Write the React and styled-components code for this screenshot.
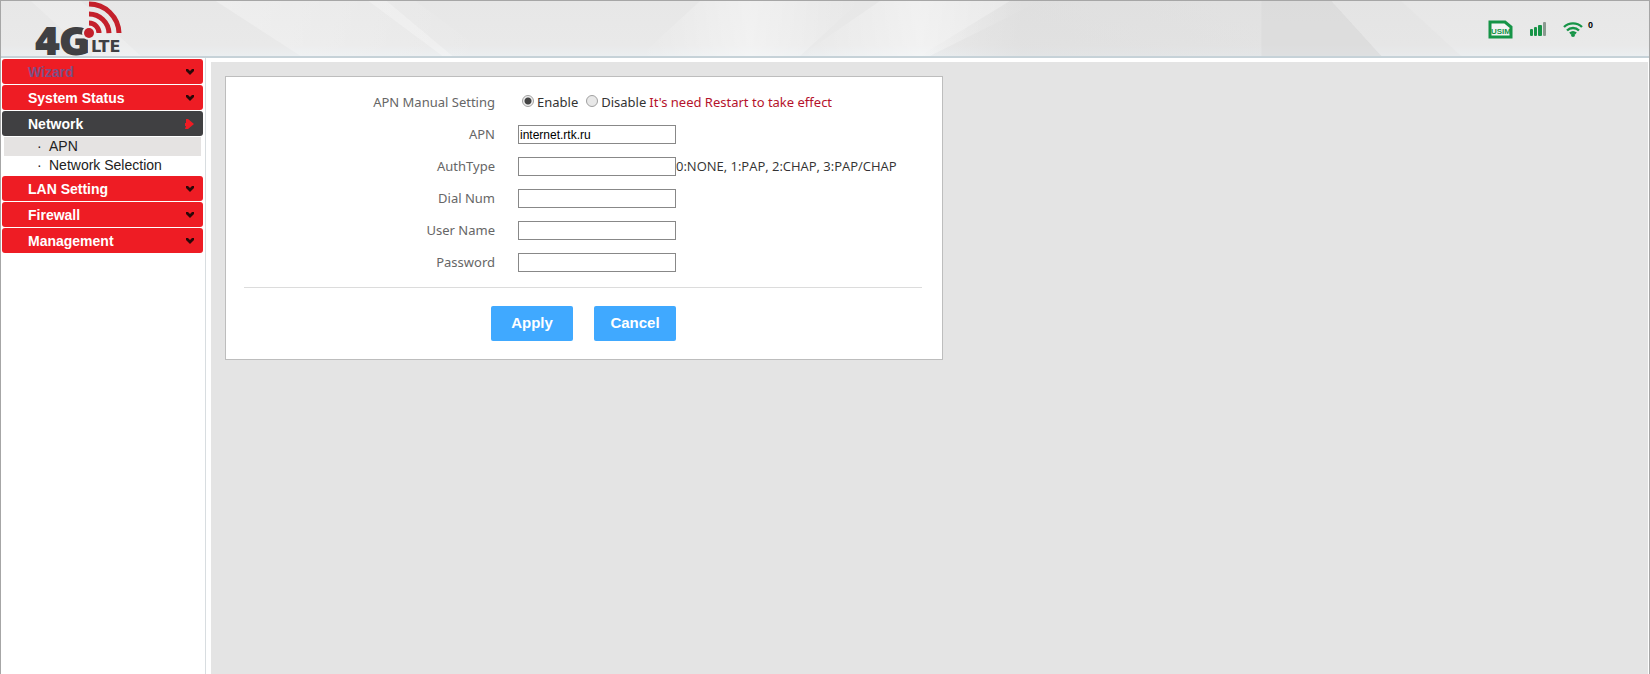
import React, { useState } from "react";
import styled, { createGlobalStyle } from "styled-components";

const menu = [
  { title: "Wizard", muted: true },
  { title: "System Status" },
  { title: "Network", open: true, children: ["APN", "Network Selection"] },
  { title: "LAN Setting" },
  { title: "Firewall" },
  { title: "Management" },
];

const fields = [
  { name: "apn", label: "APN" },
  { name: "authType", label: "AuthType", hint: "0:NONE, 1:PAP, 2:CHAP, 3:PAP/CHAP" },
  { name: "dialNum", label: "Dial Num" },
  { name: "userName", label: "User Name" },
  { name: "password", label: "Password", type: "password" },
];

const emptyForm = {
  apn: "internet.rtk.ru",
  authType: "",
  dialNum: "",
  userName: "",
  password: "",
};

const Logo = () => (
  <LogoSvg width="92" height="56" viewBox="0 0 92 56" role="img" aria-label="4G LTE">
    <g fill="none" stroke="#c4202b" strokeWidth="5">
      <path d="M54 3a30 30 0 0 1 30 29" />
      <path d="M54 13a20 20 0 0 1 20 19" />
      <path d="M54 22a10 10 0 0 1 10 10" />
    </g>
    <text
      x="0"
      y="53"
      fontFamily="DejaVu Sans, sans-serif"
      fontWeight="700"
      fontSize="36"
      fill="#404043"
      stroke="#404043"
      strokeWidth="2"
    >
      4G
    </text>
    <circle cx="54" cy="32" r="7" fill="#ececec" />
    <circle cx="54" cy="32" r="5" fill="#c4202b" />
    <rect x="53" y="38" width="4" height="17" fill="#ececec" />
    <text x="56" y="51" fontFamily="DejaVu Sans, sans-serif" fontWeight="700" fontSize="16" fill="#404043">
      LTE
    </text>
  </LogoSvg>
);

// translucent shards behind the header, stretched to its width
const HeaderArt = () => (
  <ArtSvg viewBox="0 0 1650 56" preserveAspectRatio="none" aria-hidden="true">
    <defs>
      <linearGradient id="shine">
        <stop offset="0" stopColor="#fff" stopOpacity="0" />
        <stop offset="0.5" stopColor="#fff" stopOpacity="0.4" />
        <stop offset="1" stopColor="#fff" stopOpacity="0" />
      </linearGradient>
      <linearGradient id="fade">
        <stop offset="0" stopColor="#fff" stopOpacity="0.3" />
        <stop offset="1" stopColor="#fff" stopOpacity="0" />
      </linearGradient>
      <linearGradient id="shade">
        <stop offset="0" stopColor="#d4d4d4" stopOpacity="0" />
        <stop offset="0.3" stopColor="#d4d4d4" stopOpacity="0.4" />
        <stop offset="1" stopColor="#d4d4d4" stopOpacity="0.3" />
      </linearGradient>
    </defs>
    <path d="M30 0h50l60 56H90z" fill="#fff" opacity="0.2" />
    <path d="M215 0h200l75 56H300z" fill="url(#fade)" />
    <path d="M368 0h18l66 56h-10z" fill="#fff" opacity="0.25" />
    <path d="M700 0h160l-60 56H640z" fill="url(#shine)" />
    <path d="M880 0h160l-110 56H800z" fill="url(#shine)" />
    <path d="M1010 0h252v56H920z" fill="url(#shade)" />
    <path d="M1262 0h70l50 56h-120z" fill="#d2d2d2" opacity="0.5" />
    <path d="M1332 0h70l60 56h-80z" fill="#dcdcdc" opacity="0.2" />
  </ArtSvg>
);

const SimIcon = () => (
  <svg width="25" height="20" viewBox="0 0 25 20" role="img" aria-label="USIM">
    <path d="M2 3h15l6 5v10H2z" fill="#f4f4f4" stroke="#169447" strokeWidth="3" />
    <text x="3" y="15" fontFamily="Liberation Sans, sans-serif" fontWeight="700" fontSize="8" fill="#169447">
      USIM
    </text>
  </svg>
);

const SignalIcon = () => (
  <svg width="18" height="16" viewBox="0 0 18 16" role="img" aria-label="Signal">
    <g fill="#169447">
      <rect x="1" y="8" width="3" height="7" rx="1" />
      <rect x="5" y="6" width="3" height="9" rx="1" />
      <rect x="9" y="4" width="4" height="11" rx="1" />
    </g>
    <rect x="14" y="1" width="3" height="14" rx="1" fill="#8a9a90" />
  </svg>
);

const WifiIcon = () => (
  <svg width="20" height="16" viewBox="0 0 20 16" role="img" aria-label="Wi-Fi">
    <g fill="none" stroke="#169447" strokeWidth="2.4">
      <path d="M1 6a13 13 0 0 1 18 0" />
      <path d="M4 9.500a8.500 8.500 0 0 1 12 0" />
      <path d="M7 12.500a4.500 4.500 0 0 1 6 0" />
    </g>
    <circle cx="10" cy="14" r="2" fill="#169447" />
  </svg>
);

const ChevronIcon = () => (
  <svg width="8" height="6" viewBox="0 0 8 6" aria-hidden="true">
    <path d="M0 0h2l2 2 2-2h2v2L4 6 0 2z" fill="#2a0808" />
  </svg>
);

const ArrowIcon = () => (
  <svg width="9" height="10" viewBox="0 0 9 10" aria-hidden="true">
    <path d="M1 0h2l6 5-6 5H0l1-3H0V4h1z" fill="#ee1c24" />
  </svg>
);

const App = () => {
  const [form, setForm] = useState(emptyForm);
  const [manual, setManual] = useState("enable");
  const handleChange = (e) => {
    setForm({ ...form, [e.target.name]: e.target.value });
  };
  const handleCancel = () => {
    setForm(emptyForm);
    setManual("enable");
  };

  return (
    <>
      <GlobalStyle />
      <Page>
        <Header>
          <HeaderArt />
          <Logo />
          <StatusBar>
            <SimIcon />
            <SignalIcon />
            <Clients>
              <WifiIcon />
              <span>0</span>
            </Clients>
          </StatusBar>
        </Header>
        <Body>
          <Sidebar>
            {menu.map((item) => (
              <React.Fragment key={item.title}>
                <MenuButton type="button" $open={item.open} $muted={item.muted}>
                  {item.title}
                  {item.open ? <ArrowIcon /> : <ChevronIcon />}
                </MenuButton>
                {item.children && (
                  <SubMenu>
                    {item.children.map((child) => (
                      <li key={child}>
                        <SubLink href="#" $active={child === "APN"}>
                          <span>·</span>
                          {child}
                        </SubLink>
                      </li>
                    ))}
                  </SubMenu>
                )}
              </React.Fragment>
            ))}
          </Sidebar>
          <Content>
            <Panel onSubmit={(e) => e.preventDefault()}>
              <Row role="radiogroup" aria-labelledby="manual">
                <Label as="span" id="manual">
                  APN Manual Setting
                </Label>
                <Options>
                  {["Enable", "Disable"].map((option) => (
                    <RadioLabel key={option}>
                      <Radio
                        type="radio"
                        name="manual"
                        value={option.toLowerCase()}
                        checked={manual === option.toLowerCase()}
                        onChange={(e) => setManual(e.target.value)}
                      />
                      {option}
                    </RadioLabel>
                  ))}
                  <Warning>It's need Restart to take effect</Warning>
                </Options>
              </Row>
              {fields.map(({ name, label, type, hint }) => (
                <Row key={name}>
                  <Label htmlFor={name}>{label}</Label>
                  <TextInput
                    id={name}
                    name={name}
                    type={type || "text"}
                    value={form[name]}
                    onChange={handleChange}
                  />
                  {hint && <Hint>{hint}</Hint>}
                </Row>
              ))}
              <Actions>
                <Button type="submit">Apply</Button>
                <Button type="button" onClick={handleCancel}>
                  Cancel
                </Button>
              </Actions>
            </Panel>
          </Content>
        </Body>
      </Page>
    </>
  );
};

export default App;

const GlobalStyle = createGlobalStyle`
  * {
    box-sizing: border-box;
  }
  body {
    margin: 0;
    background: white;
    font-family: "Liberation Sans", Arial, sans-serif;
  }
`;
const Page = styled.div`
  display: flex;
  flex-direction: column;
  min-height: 100vh;
  border: 1px solid #a6a6a6;
  border-bottom: none;
`;
const Header = styled.header`
  position: relative;
  z-index: 0;
  display: flex;
  justify-content: space-between;
  align-items: flex-start;
  height: 57px;
  padding: 0 56px 0 34px;
  border-bottom: 2px solid #c6d2d8;
  background: linear-gradient(to bottom, #e7e7e7, #e9e9e9 80%, #ebeef0);
`;
const ArtSvg = styled.svg`
  position: absolute;
  inset: 0;
  z-index: -1;
  width: 100%;
  height: 100%;
`;
const LogoSvg = styled.svg`
  overflow: visible;
`;
const StatusBar = styled.div`
  display: flex;
  align-items: center;
  gap: 16px;
  padding-top: 18px;
`;
const Clients = styled.div`
  display: flex;
  gap: 5px;
  span {
    font-size: 9px;
    font-weight: bold;
    line-height: 8px;
  }
`;
const Body = styled.div`
  display: flex;
  flex: 1;
`;
const Sidebar = styled.nav`
  display: flex;
  flex-direction: column;
  gap: 1px;
  width: 205px;
  padding: 1px 2px 0 1px;
  border-right: 1px solid #d8dde0;
`;
const MenuButton = styled.button`
  display: flex;
  justify-content: space-between;
  align-items: center;
  height: 25px;
  padding: 0 9px 0 26px;
  border: none;
  border-radius: 3px;
  background: ${({ $open }) => ($open ? "#404042" : "#ee1c24")};
  color: ${({ $muted }) => ($muted ? "#7d4f86" : "white")};
  font-family: inherit;
  font-size: 14px;
  font-weight: bold;
  cursor: pointer;
`;
const SubMenu = styled.ul`
  margin: 0;
  padding: 0 2px;
  list-style: none;
`;
const SubLink = styled.a`
  display: flex;
  height: 19px;
  padding-left: 33px;
  background: ${({ $active }) => ($active ? "#e5e3e2" : "white")};
  color: #222;
  font-size: 14px;
  line-height: 19px;
  text-decoration: none;
  span {
    width: 12px;
  }
`;
const Content = styled.main`
  flex: 1;
  margin: 4px 1px 0 5px;
  padding: 14px;
  background: #e4e4e4;
`;
const Panel = styled.form`
  width: 100%;
  max-width: 718px;
  padding: 9px 20px 18px 18px;
  border: 1px solid #bdbdbd;
  background: white;
  color: #333;
  font-family: "Noto Sans", sans-serif;
  font-size: 13px;
`;
const Row = styled.div`
  display: flex;
  align-items: center;
  height: 32px;
`;
const Label = styled.label`
  width: 251px;
  margin-right: 23px;
  color: #666;
  text-align: right;
`;
const Options = styled.div`
  display: flex;
  align-items: center;
  padding-left: 4px;
`;
const RadioLabel = styled.label`
  display: flex;
  align-items: center;
  margin-right: 8px;
  & + & {
    margin-right: 3px;
  }
`;
const Radio = styled.input`
  appearance: none;
  width: 12px;
  height: 12px;
  margin: 0 3px 2px 0;
  border: 1px solid #a0a0a0;
  border-radius: 50%;
  background: #e8e8e8;
  &:checked {
    background: radial-gradient(circle, #444 0 3px, #eee 4px);
  }
`;
const Warning = styled.span`
  color: #b5122b;
`;
const TextInput = styled.input`
  width: 158px;
  height: 19px;
  padding: 1px 1px 0;
  border: 1px solid #888;
  background: white;
  color: black;
  font-family: "Liberation Sans", Arial, sans-serif;
  font-size: 12px;
`;
const Hint = styled.span`
  color: #333;
  font-family: "Open Sans", sans-serif;
`;
const Actions = styled.div`
  display: flex;
  gap: 21px;
  margin-top: 9px;
  padding: 18px 0 0 247px;
  border-top: 1px solid #dcdcdc;
`;
const Button = styled.button`
  width: 82px;
  height: 35px;
  padding: 0 0 2px;
  border: none;
  border-radius: 2px;
  background: #40a9ff;
  color: white;
  font-family: "Liberation Sans", Arial, sans-serif;
  font-size: 15px;
  font-weight: bold;
  cursor: pointer;
`;
